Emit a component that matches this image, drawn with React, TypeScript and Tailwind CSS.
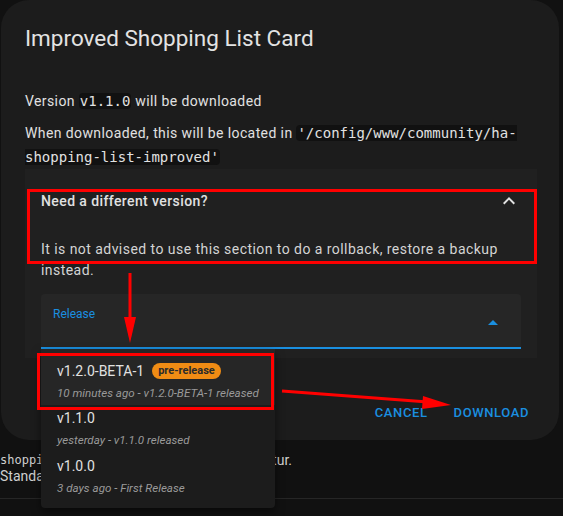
import React from 'react';

const releases = [
  { tag: 'v1.2.0-BETA-1', note: '10 minutes ago - v1.2.0-BETA-1 released', pre: true },
  { tag: 'v1.1.0', note: 'yesterday - v1.1.0 released', pre: false },
  { tag: 'v1.0.0', note: '3 days ago - First Release', pre: false },
];

const mono = "font-['DejaVu_Sans_Mono',monospace]";

const App = () => {
  return (
    <div className="relative w-[563px] h-[516px] overflow-hidden bg-[#111111] font-['Roboto',sans-serif] text-[#e1e1e1]">
      {/* Dialog */}
      <div className="ml-[1px] w-[558px] h-[440px] rounded-[28px] bg-[#1c1c1c] pl-6 pr-[22px] pt-[22px] flex flex-col">
        <h2 className="text-[22.5px] leading-8 font-normal text-[#e3e3e3]">Improved Shopping List Card</h2>

        <p className="mt-[35px] text-[14px] leading-6 tracking-[0.4px]">
          Version <code className={`${mono} text-[14px] tracking-normal bg-[#111111] px-[1px] rounded-sm`}>v1.1.0</code> will be downloaded
        </p>
        <p className="mt-2 text-[14px] leading-6 tracking-[0.4px]">
          When downloaded, this will be located in{' '}
          <code className={`${mono} text-[14px] tracking-normal bg-[#111111] px-[1px] rounded-sm`}>'/config/www/community/ha-shopping-list-improved'</code>
        </p>

        {/* Expansion panel */}
        <div className="w-[512px] bg-[#202020] flex flex-col">
          <div className="h-[64px] pl-4 pr-4 flex items-center justify-between">
            <span className="text-[14px] font-medium tracking-[0.4px]">Need a different version?</span>
            <svg width="24" height="24" viewBox="0 0 24 24" className="fill-[#e1e1e1]">
              <path d="M7.41 15.41 12 10.83l4.59 4.58L18 14l-6-6-6 6z" />
            </svg>
          </div>
          <div className="px-4 pt-[6px] pb-[9px]">
            <p className="text-[14px] leading-[21px] tracking-[0.45px] text-[#d4d4d4] pr-4">
              It is not advised to use this section to do a rollback, restore a backup instead.
            </p>
            <div className="mt-[13px] h-[55px] rounded-t-[4px] bg-[#262626] border-b-2 border-[#1a8fe0] pl-3 pr-4 flex items-center justify-between">
              <span className="self-start mt-[11px] text-[12px] text-[#1a8fe0]">Release</span>
              <svg width="24" height="24" viewBox="0 0 24 24" className="fill-[#1a8fe0] mt-[2px]">
                <path d="M7 15l5-5 5 5z" />
              </svg>
            </div>
          </div>
        </div>

        {/* Actions */}
        <div className="mt-auto mb-[9px] flex justify-end gap-[10px]">
          <button className="h-9 px-2 text-[13px] font-medium tracking-[0.6px] text-[#1a8fe0]">CANCEL</button>
          <button className="h-9 px-2 text-[13px] font-medium tracking-[0.6px] text-[#1a8fe0]">DOWNLOAD</button>
        </div>
      </div>

      {/* Page content behind the dialog */}
      <div className="pt-[12px] text-[14px] leading-4 text-[#cfcfcf]">
        <div className="flex w-[292px] justify-between">
          <span className={`${mono} text-[12px]`}>shopping-list</span>
          <span>Struktur.</span>
        </div>
        <div>Standard</div>
      </div>
      <div className="mt-[14px] border-t border-[#262626]" />

      {/* Release menu */}
      <div className="absolute left-[41px] top-[349px] w-[234px] h-[159px] rounded-[4px] bg-[#1c1c1c] shadow-[0_4px_10px_rgba(0,0,0,0.5)]">
        {releases.map((r, i) => (
          <div
            key={r.tag}
            className={i === 0 ? 'bg-[#262626] pl-4 pt-[10px] pb-[2px]' : 'pl-4 pt-[1px] pb-[3px]'}
          >
            <div className="flex items-center h-6">
              <span className="text-[14px] text-[#e1e1e1]">{r.tag}</span>
              {r.pre && (
                <span className="ml-2 h-4 px-[6px] rounded-full bg-[#f08c14] text-[11px] leading-4 font-bold text-[#2a2a2a]">
                  pre-release
                </span>
              )}
            </div>
            <div className="h-5 leading-5 text-[11.6px] italic whitespace-nowrap text-[#9a9a9a]">{r.note}</div>
          </div>
        ))}
      </div>

      {/* Annotations */}
      <div className="absolute left-[27px] top-[189px] w-[510px] h-[75px] border-[3px] border-[#ff0000]" />
      <div className="absolute left-[37px] top-[353px] w-[237px] h-[57px] border-[3px] border-[#ff0000]" />
      <svg className="absolute left-0 top-0" width="563" height="516">
        <line x1="130" y1="273" x2="130" y2="320" stroke="#ff0000" strokeWidth="3" />
        <polygon points="124,317 136,317 130,343" fill="#ff0000" />
        <line x1="282" y1="391" x2="428" y2="402" stroke="#ff0000" strokeWidth="3" />
        <polygon points="423,396 451,405 422,409" fill="#ff0000" />
      </svg>
    </div>
  );
};

export default App;
